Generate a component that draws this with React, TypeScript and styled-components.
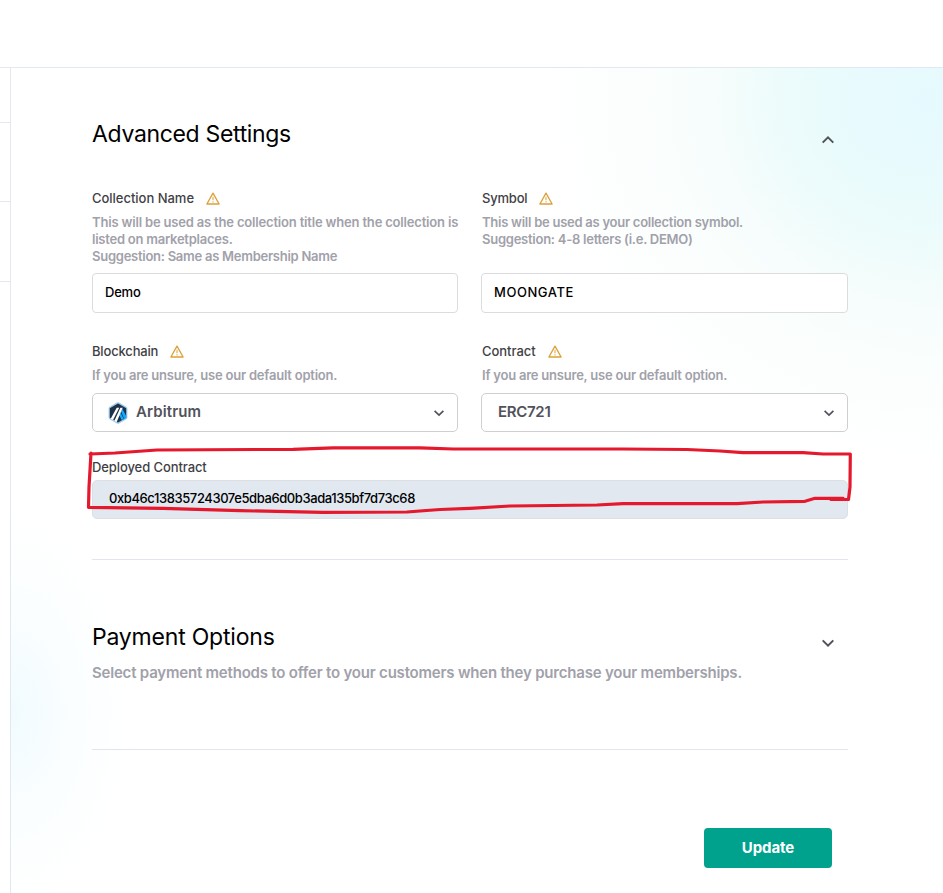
import React from "react";
import styled, { createGlobalStyle } from "styled-components";

const GlobalStyle = createGlobalStyle`
  *, *::before, *::after { box-sizing: border-box; }
  body { margin: 0; background: #fff; overflow: hidden; font-family: Inter, "Liberation Sans", sans-serif; }
`;

const Page = styled.div`
  height: 893px;
  display: grid;
  grid-template-rows: 68px 1fr;
`;

const Header = styled.header`
  border-bottom: 1px solid #e2e8f0;
`;

const Body = styled.div`
  display: grid;
  grid-template-columns: 11px 1fr;
  min-height: 0;
`;

const Sidebar = styled.aside`
  border-right: 1px solid #e2e8f0;
  display: flex;
  flex-direction: column;
`;

const SidebarItem = styled.div<{ $height: number }>`
  height: ${(p) => p.$height}px;
  border-bottom: 1px solid #e2e8f0;
`;

const Main = styled.main`
  padding: 0 95px 0 81px;
  background:
    radial-gradient(ellipse 210px 190px at 98% 4%, rgba(230, 249, 255, 0.9) 0%, rgba(230, 250, 254, 0.55) 50%, rgba(235, 252, 252, 0) 100%),
    radial-gradient(ellipse 400px 370px at 100% 4%, rgba(230, 251, 249, 0.9) 0%, rgba(236, 251, 249, 0.75) 40%, rgba(247, 253, 252, 0.55) 72%, rgba(255, 255, 255, 0) 100%),
    radial-gradient(ellipse 120px 200px at 0% 78%, rgba(240, 251, 255, 0.95) 0%, rgba(247, 253, 255, 0.6) 50%, rgba(255, 255, 255, 0) 100%),
    #fff;
`;

const SectionHead = styled.div<{ $top: number }>`
  padding: ${(p) => p.$top}px 13px 0 0;
  display: flex;
  justify-content: space-between;
  align-items: flex-start;
  height: ${(p) => p.$top + 32}px;
`;

const Title = styled.h2<{ $tracking: number }>`
  margin: 0;
  font-size: 23px;
  line-height: 32px;
  font-weight: 400;
  color: #000;
  white-space: nowrap;
  letter-spacing: ${(p) => p.$tracking}px;
`;

const Toggle = styled.button`
  margin: 17px 0 0;
  padding: 0;
  border: 0;
  background: none;
  display: flex;
`;

const Fields = styled.div`
  display: grid;
  grid-template-columns: 366px 367px;
  column-gap: 23px;
`;

const Field = styled.div<{ $top: number; $inset?: number }>`
  display: flex;
  flex-direction: column;
  padding-top: ${(p) => p.$top}px;

  > label, > p { padding-left: ${(p) => p.$inset ?? 0}px; }
`;

const Label = styled.label<{ $tracking: number }>`
  display: flex;
  align-items: center;
  height: 20px;
  font-size: 13px;
  line-height: 20px;
  font-weight: 500;
  color: #3f3f46;
  white-space: nowrap;
  letter-spacing: ${(p) => p.$tracking}px;
  svg { margin: 1px 0 0 12px; }
`;

const Hint = styled.p<{ $lines: number }>`
  margin: 6px 0 0;
  height: ${(p) => p.$lines * 17}px;
`;

const HintLine = styled.span<{ $tracking: number }>`
  display: block;
  font-size: 13px;
  line-height: 17px;
  font-weight: 600;
  color: #a1a1aa;
  white-space: nowrap;
  letter-spacing: ${(p) => p.$tracking}px;
`;

const Input = styled.input<{ $tracking: number }>`
  margin-top: 8px;
  width: 100%;
  height: 40px;
  padding: 0 12px 2px;
  border: 1px solid #dcdcde;
  border-radius: 4px;
  background: #fff;
  font: 500 13px Inter, sans-serif;
  letter-spacing: ${(p) => p.$tracking}px;
  color: #000;
`;

const Select = styled.div<{ $tracking: number }>`
  margin-top: 9px;
  height: 39px;
  display: flex;
  align-items: center;
  padding: 0 12px 0 15px;
  border: 1px solid #cfcfd2;
  border-radius: 5px;
  background: #fff;
  font-size: 15px;
  font-weight: 600;
  color: #52525b;
  letter-spacing: ${(p) => p.$tracking}px;
`;

const SelectText = styled.span<{ $indent: number }>`
  flex: 1;
  padding-bottom: 2px;
  margin-left: ${(p) => p.$indent}px;
`;

const Deployed = styled.div`
  position: relative;
  padding-top: 25px;
`;

const ReadOnly = styled.div`
  margin-top: 3px;
  height: 39px;
  padding: 0 16px 3px;
  display: flex;
  align-items: center;
  border: 1px solid #dcdfe4;
  border-radius: 5px;
  background: #e2e8f0;
  font-size: 13px;
  font-weight: 500;
  color: #000;
  letter-spacing: -0.41px;
`;

const Annotation = styled.svg`
  position: absolute;
  left: -7px;
  top: 10px;
  pointer-events: none;
`;

const Divider = styled.hr<{ $top: number }>`
  margin: ${(p) => p.$top}px 0 0;
  border: 0;
  height: 1px;
  background: #e2e6ec;
`;

const Subtitle = styled.p`
  margin: 8px 0 0;
  font-size: 15px;
  line-height: 24px;
  font-weight: 600;
  color: #a1a1aa;
  white-space: nowrap;
  letter-spacing: -0.2px;
`;

const Actions = styled.div`
  display: flex;
  justify-content: flex-end;
  padding: 78px 16px 0 0;
`;

const UpdateButton = styled.button`
  width: 128px;
  height: 40px;
  padding: 0 0 2px;
  border: 0;
  border-radius: 4px;
  background: #00a28d;
  color: #fff;
  font: 700 15px Inter, sans-serif;
  letter-spacing: -0.1px;
`;

function Chevron({ up = false }: { up?: boolean }) {
  return (
    <svg width="14" height="10" viewBox="0 0 14 10" fill="none" stroke="#52525b" strokeWidth="2">
      <path d={up ? "M1.7 7.6 7 2.4l5.3 5.2" : "M1.7 2.4 7 7.6l5.3-5.2"} />
    </svg>
  );
}

function SelectChevron() {
  return (
    <svg width="12" height="8" viewBox="0 0 12 8" fill="none" stroke="#52525b" strokeWidth="1.7">
      <path d="M1.6 1.8 6 6l4.4-4.2" />
    </svg>
  );
}

function Warning() {
  return (
    <svg width="14" height="13" viewBox="0 0 14 13" fill="none" stroke="#dca03a" strokeWidth="1.3">
      <path d="M7 1.1 13.1 12H.9Z" strokeLinejoin="round" />
      <path d="M7 4.8v3.4M7 9.3v1.2" stroke="#e5b866" />
    </svg>
  );
}

function ArbitrumLogo() {
  return (
    <svg width="20" height="22" viewBox="0 0 20 22">
      <path d="M10 .2Q10.6 .2 11.200 .6L18.400 4.700Q19.400 5.300 19.400 6.400V15.600Q19.400 16.700 18.400 17.300L11.200 21.400Q10 22 8.800 21.400L1.600 17.300Q.6 16.700 .6 15.600V6.400Q.6 5.300 1.600 4.700L8.800 .6Q9.400 .2 10 .2Z" fill="#9dcced" />
      <path d="M10 1.6 18.2 6.3v9.4L10 20.4 1.8 15.7V6.3Z" fill="#213147" />
      <path d="M13 9.300 14.300 6.800 18.200 14v1.700L16.300 17.300Z" fill="#12aaff" />
      <path d="M11.300 13.300 12.500 10.700 15.800 17.100 13.800 18.300Z" fill="#12aaff" />
      <path d="M8.700 5.800h2.500L5 18.100 2.700 16.700ZM12.400 5.800h2.300L8.700 20.100l-2.400-1.200Z" fill="#fff" />
    </svg>
  );
}

export default function App() {
  return (
    <Page>
      <GlobalStyle />
      <Header />
      <Body>
        <Sidebar>
          <SidebarItem $height={55} />
          <SidebarItem $height={79} />
          <SidebarItem $height={80} />
        </Sidebar>
        <Main>
          <SectionHead $top={50}>
            <Title $tracking={-0.33}>Advanced Settings</Title>
            <Toggle aria-label="Collapse advanced settings">
              <Chevron up />
            </Toggle>
          </SectionHead>

          <Fields>
            <Field $top={38}>
              <Label $tracking={-0.02}>Collection Name <Warning /></Label>
              <Hint $lines={3}>
                <HintLine $tracking={-0.18}>This will be used as the collection title when the collection is</HintLine>
                <HintLine $tracking={-0.24}>listed on marketplaces.</HintLine>
                <HintLine $tracking={-0.26}>Suggestion: Same as Membership Name</HintLine>
              </Hint>
              <Input $tracking={-0.2} defaultValue="Demo" />
            </Field>
            <Field $top={38} $inset={1}>
              <Label $tracking={-0.2}>Symbol <Warning /></Label>
              <Hint $lines={3}>
                <HintLine $tracking={-0.26}>This will be used as your collection symbol.</HintLine>
                <HintLine $tracking={-0.25}>Suggestion: 4-8 letters (i.e. DEMO)</HintLine>
              </Hint>
              <Input $tracking={0.55} defaultValue="MOONGATE" />
            </Field>
            <Field $top={28}>
              <Label $tracking={-0.17}>Blockchain <Warning /></Label>
              <Hint $lines={1}>
                <HintLine $tracking={-0.22}>If you are unsure, use our default option.</HintLine>
              </Hint>
              <Select $tracking={0.1}>
                <ArbitrumLogo />
                <SelectText $indent={8}>Arbitrum</SelectText>
                <SelectChevron />
              </Select>
            </Field>
            <Field $top={28} $inset={1}>
              <Label $tracking={-0.04}>Contract <Warning /></Label>
              <Hint $lines={1}>
                <HintLine $tracking={-0.22}>If you are unsure, use our default option.</HintLine>
              </Hint>
              <Select $tracking={-0.3}>
                <SelectText $indent={1}>ERC721</SelectText>
                <SelectChevron />
              </Select>
            </Field>
          </Fields>

          <Deployed>
            <Label $tracking={-0.09}>Deployed Contract</Label>
            <ReadOnly>0xb46c13835724307e5dba6d0b3ada135bf7d73c68</ReadOnly>
            <Annotation width="770" height="76" viewBox="85 442 770 76" fill="none" stroke="#e5192d" strokeWidth="3.2" strokeLinecap="round" strokeLinejoin="round">
              <path d="M90 454 115 453 157 450 293 449.3 333 447.8H420L453 449H623L687 449.5 720 451 743 452.7H803L823 454H850.3L850 487 848.5 499.5H831L843 498.3H815L805 501.3 763 502 737 503.7H623L597 505 510 506 470 508.3 440 509.5 407 512 323 512.3 240 510.7 163 508.3 88.5 507.3 89 487 91 453" />
            </Annotation>
          </Deployed>

          <Divider $top={40} />

          <SectionHead $top={61}>
            <Title $tracking={-0.2}>Payment Options</Title>
            <Toggle aria-label="Expand payment options">
              <Chevron />
            </Toggle>
          </SectionHead>
          <Subtitle>Select payment methods to offer to your customers when they purchase your memberships.</Subtitle>
          <Divider $top={64} />

          <Actions>
            <UpdateButton>Update</UpdateButton>
          </Actions>
        </Main>
      </Body>
    </Page>
  );
}
